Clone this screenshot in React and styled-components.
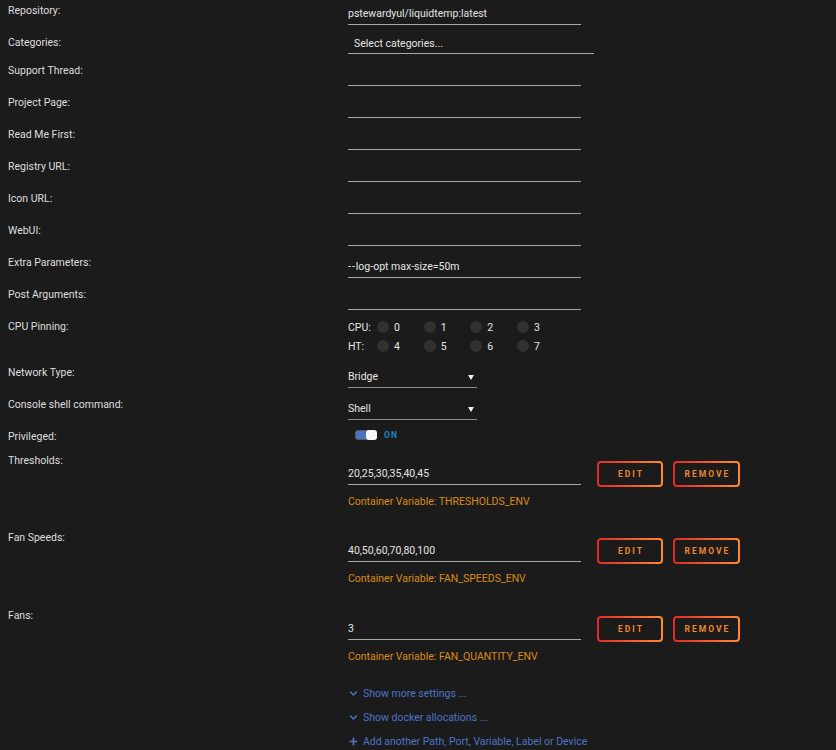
import React from "react";
import styled, { createGlobalStyle } from "styled-components";
import { FaChevronDown, FaPlus } from "react-icons/fa";

const Global = createGlobalStyle`
  html, body {
    margin: 0;
    background: #1c1b1b;
  }
`;

const Page = styled.div`
  background: #1c1b1b;
  min-height: 750px;
  padding: 2px 0 0 8px;
  font-family: Roboto, "Noto Sans", sans-serif;
  font-size: 10.5px;
  color: #e4e4e4;
  box-sizing: border-box;
`;

const Row = styled.div`
  display: grid;
  grid-template-columns: 340px 1fr;
  height: ${(p) => p.$h || 32}px;
`;

const Label = styled.div`
  padding-top: 1px;
  line-height: 16px;
  color: #dedede;
`;

const Value = styled.div`
  padding-top: ${(p) => p.$top || 0}px;
`;

const Field = styled.div`
  width: ${(p) => p.$w || 233}px;
  height: ${(p) => p.$h || 20}px;
  line-height: ${(p) => p.$h || 20}px;
  padding-left: ${(p) => p.$pad || 0}px;
  border-bottom: 1px solid #a8a8a8;
  box-sizing: content-box;
  white-space: nowrap;
`;

const Dashes = styled.span`
  letter-spacing: 1px;
`;

const Select = styled(Field)`
  position: relative;
  border-bottom-color: #8c8c8c;
  &::after {
    content: "";
    position: absolute;
    right: 3px;
    top: 8px;
    border-left: 3px solid transparent;
    border-right: 3px solid transparent;
    border-top: 5px solid #f2f2f2;
  }
`;

const PinGrid = styled.div`
  display: grid;
  grid-template-columns: 29px repeat(4, 46.67px);
  grid-auto-rows: 19px;
  align-items: center;
`;

const Pin = styled.div`
  display: flex;
  align-items: center;
  gap: 5px;
`;

const Dot = styled.span`
  width: 12px;
  height: 12px;
  border-radius: 50%;
  background: #313131;
  transform: translateY(-1px);
`;

const SwitchWrap = styled.div`
  display: flex;
  align-items: center;
  gap: 7px;
  padding-left: 7px;
`;

const Track = styled.span`
  position: relative;
  width: 22px;
  height: 10px;
  border-radius: 3px;
  background: #4a73c6;
  border: 1px solid #5a5a5a;
  box-sizing: border-box;
`;

const Knob = styled.span`
  position: absolute;
  right: -1px;
  top: -1px;
  width: 11px;
  height: 10px;
  border-radius: 3px;
  background: #f7f7f7;
`;

const SwitchText = styled.span`
  color: #1f80c4;
  font-size: 8.5px;
  font-weight: 700;
  letter-spacing: 1.2px;
`;

const Controls = styled.div`
  display: flex;
  align-items: center;
`;

const Button = styled.button`
  width: ${(p) => p.$w}px;
  height: 26px;
  margin-left: ${(p) => p.$ml}px;
  border: 2px solid transparent;
  border-radius: 4px;
  background: linear-gradient(#1c1b1b, #1c1b1b) padding-box,
    linear-gradient(90deg, #e22828, #ff8c2f) border-box;
  color: #ee8530;
  font-family: Roboto, "Noto Sans", sans-serif;
  font-size: 8.5px;
  font-weight: 700;
  letter-spacing: 2px;
  padding: 0;
  text-indent: 2px;
`;

const Hint = styled.div`
  margin-top: 7px;
  line-height: 16px;
  color: #d98a1c;
`;

const Links = styled.div`
  margin-left: 340px;
`;

const LinkLine = styled.div`
  display: flex;
  align-items: center;
  gap: 5px;
  height: 24px;
  color: #4d74c6;
  svg {
    width: 9px;
    height: 9px;
    margin-left: 1px;
  }
`;

const textRows = [
  ["Support Thread:", ""],
  ["Project Page:", ""],
  ["Read Me First:", ""],
  ["Registry URL:", ""],
  ["Icon URL:", ""],
  ["WebUI:", ""],
  ["Extra Parameters:", <><Dashes>--</Dashes>log-opt max-size=50m</>],
  ["Post Arguments:", ""],
];

const variables = [
  { label: "Thresholds:", value: "20,25,30,35,40,45", env: "THRESHOLDS_ENV", h: 77 },
  { label: "Fan Speeds:", value: "40,50,60,70,80,100", env: "FAN_SPEEDS_ENV", h: 78 },
  { label: "Fans:", value: "3", env: "FAN_QUANTITY_ENV", h: 74 },
];

const App = () => {
  return (
    <Page>
      <Global />
      <Row $h={32}>
        <Label>Repository:</Label>
        <Value $top={2}>
          <Field>pstewardyul/liquidtemp:latest</Field>
        </Value>
      </Row>
      <Row $h={28}>
        <Label>Categories:</Label>
        <Value>
          <Field $w={240} $pad={6} $h={19}>
            Select categories...
          </Field>
        </Value>
      </Row>
      {textRows.map(([label, value]) => (
        <Row key={label}>
          <Label>{label}</Label>
          <Value $top={3}>
            <Field>{value}</Field>
          </Value>
        </Row>
      ))}
      <Row $h={46}>
        <Label>CPU Pinning:</Label>
        <Value>
          <PinGrid>
            <span>CPU:</span>
            {[0, 1, 2, 3].map((n) => (
              <Pin key={n}>
                <Dot />
                {n}
              </Pin>
            ))}
            <span>HT:</span>
            {[4, 5, 6, 7].map((n) => (
              <Pin key={n}>
                <Dot />
                {n}
              </Pin>
            ))}
          </PinGrid>
        </Value>
      </Row>
      <Row>
        <Label>Network Type:</Label>
        <Value $top={3}>
          <Select $w={129}>Bridge</Select>
        </Value>
      </Row>
      <Row>
        <Label>Console shell command:</Label>
        <Value $top={3}>
          <Select $w={129}>Shell</Select>
        </Value>
      </Row>
      <Row $h={24}>
        <Label>Privileged:</Label>
        <Value $top={2}>
          <SwitchWrap>
            <Track>
              <Knob />
            </Track>
            <SwitchText>ON</SwitchText>
          </SwitchWrap>
        </Value>
      </Row>
      {variables.map((v) => (
        <Row key={v.label} $h={v.h}>
          <Label>{v.label}</Label>
          <Value $top={9}>
            <Controls>
              <Field>{v.value}</Field>
              <Button $w={66} $ml={16}>EDIT</Button>
              <Button $w={67} $ml={10}>REMOVE</Button>
            </Controls>
            <Hint>Container Variable: {v.env}</Hint>
          </Value>
        </Row>
      ))}
      <Links>
        <LinkLine>
          <FaChevronDown />
          Show more settings ...
        </LinkLine>
        <LinkLine>
          <FaChevronDown />
          Show docker allocations ...
        </LinkLine>
        <LinkLine>
          <FaPlus />
          Add another Path, Port, Variable, Label or Device
        </LinkLine>
      </Links>
    </Page>
  );
};

export default App;
